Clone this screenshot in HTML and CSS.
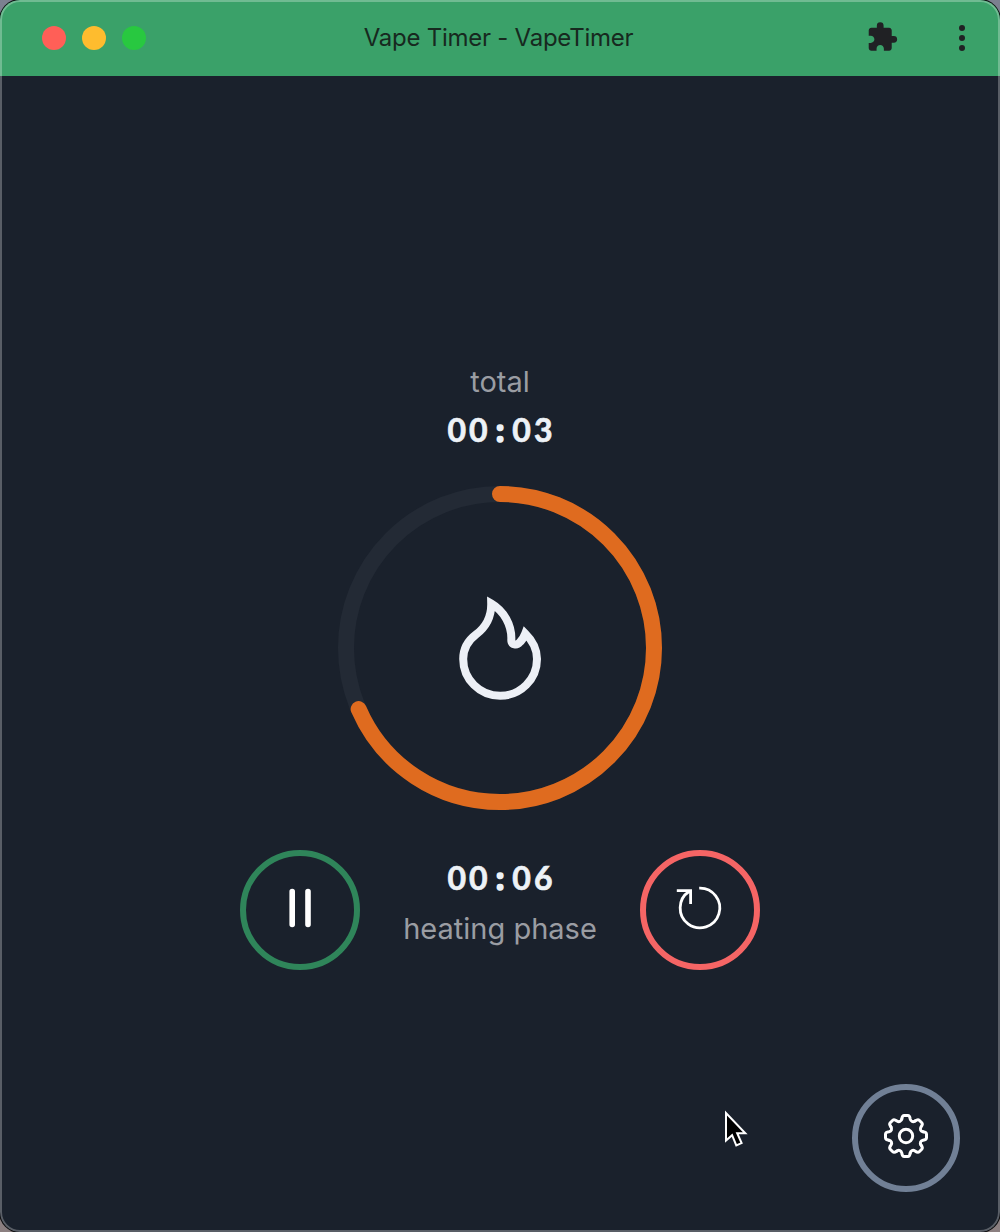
FILE: index.html
```html
<!DOCTYPE html>
<html lang="en">
<head>
<meta charset="utf-8">
<title>Vape Timer - VapeTimer</title>
<link rel="stylesheet" href="styles.css">
</head>
<body>
<div class="window">
  <header class="titlebar">
    <div class="lights"><i class="light close"></i><i class="light minimize"></i><i class="light maximize"></i></div>
    <h1 class="title">Vape Timer - VapeTimer</h1>
    <div class="tools">
      <svg class="puzzle" viewBox="0 0 24 24"><path d="M20.5 11H19V7c0-1.1-.9-2-2-2h-4V3.5a2.5 2.5 0 0 0-5 0V5H4c-1.1 0-1.99.9-1.99 2v3.8H3.5c1.49 0 2.7 1.21 2.7 2.7s-1.21 2.7-2.7 2.7H2V20c0 1.1.9 2 2 2h3.8v-1.5c0-1.49 1.21-2.7 2.7-2.7 1.49 0 2.7 1.21 2.7 2.7V22H17c1.1 0 2-.9 2-2v-4h1.5a2.5 2.5 0 0 0 0-5z"/></svg>
      <svg class="more" viewBox="0 0 8 28"><circle cx="4" cy="4" r="3"/><circle cx="4" cy="14" r="3"/><circle cx="4" cy="24" r="3"/></svg>
    </div>
  </header>
  <main class="content">
    <section class="total">
      <div class="label">total</div>
      <div class="time">00<span class="colon">:</span>03</div>
    </section>
    <svg class="ring" viewBox="0 0 324 324">
      <circle class="track" cx="162" cy="162" r="154"/>
      <circle class="progress" cx="162" cy="162" r="154" pathLength="100" transform="rotate(-90 162 162)"/>
      <path class="flame" transform="translate(-338 -486)" d="M491.2 603.5C504 611 512 625 511.3 640C511.3 645 517 645.6 519.5 642.5C523 639.5 524 637 525.3 633.5C533 641 537 650 537 659A36.8 36.7 0 0 1 463.2 659C463.2 648 468 640.5 476 634.5C486 627 491.5 618 491.2 603.5Z"/>
    </svg>
    <section class="controls">
      <button class="round pause" aria-label="Pause">
        <svg viewBox="0 0 120 120"><path class="bars" d="M52.2 41.5v33M68 41.5v33"/></svg>
      </button>
      <div class="phase">
        <div class="time">00<span class="colon">:</span>06</div>
        <div class="label">heating phase</div>
      </div>
      <button class="round reset" aria-label="Reset">
        <svg viewBox="0 0 120 120"><path class="line" d="M59.2 38.2A19.8 19.8 0 1 1 49 41.5M36.8 40.6H50.6V54"/></svg>
      </button>
    </section>
    <footer class="bottom">
      <button class="round settings" aria-label="Settings">
        <svg viewBox="-54 -54 108 108">
          <g class="gear" transform="translate(0 -2)">
            <path id="tooth" d="M-4.2-17C-3.9-19.5-3.2-20.5-1.8-20.5H1.8C3.2-20.5 3.9-19.5 4.2-17C4.8-14.5 6.86-13.65 9.05-14.99"/>
            <use href="#tooth" transform="rotate(45)"/><use href="#tooth" transform="rotate(90)"/>
            <use href="#tooth" transform="rotate(135)"/><use href="#tooth" transform="rotate(180)"/>
            <use href="#tooth" transform="rotate(225)"/><use href="#tooth" transform="rotate(270)"/>
            <use href="#tooth" transform="rotate(315)"/>
            <circle r="6.7"/>
          </g>
        </svg>
      </button>
    </footer>
  </main>
  <svg class="cursor" viewBox="0 0 26 40"><path d="M2 4V31.6L8.1 26.2L12.3 36.4L17.6 34.1L13.2 24.2H21.3Z"/></svg>
</div>
</body>
</html>
```
FILE: styles.css
```css
* { box-sizing: border-box; }
body {
  margin: 0;
  background: linear-gradient(#7c8090, #64687a 50%, #8b7f80);
  font-family: Inter, "Liberation Sans", sans-serif;
}
.window {
  position: relative;
  display: flex;
  flex-direction: column;
  height: 1232px;
  overflow: hidden;
  border-radius: 20px;
  background: #1a212c;
  box-shadow: 0 0 0 1px #111;
}
.window::after {
  content: "";
  position: absolute;
  inset: 0;
  border: 2px solid rgba(255, 255, 255, .28);
  border-radius: 20px;
  pointer-events: none;
}
.titlebar {
  display: grid;
  grid-template-columns: 1fr auto 1fr;
  align-items: center;
  height: 76px;
  padding: 0 35px 0 42px;
  background: #3aa169;
}
.lights { display: flex; gap: 16px; }
.light { width: 24px; height: 24px; border-radius: 50%; }
.close { background: #ff5f57; }
.minimize { background: #febc2e; }
.maximize { background: #28c840; }
.title {
  margin: 0 0 2px -10px;
  font-size: 24px;
  font-weight: 400;
  letter-spacing: -.25px;
  color: #17291f;
}
.tools { display: flex; justify-content: flex-end; align-items: center; gap: 60px; margin-right: -1px; fill: #202124; }
.puzzle { width: 32.5px; height: 32.5px; margin-bottom: 1px; }
.more { width: 8px; height: 28px; }
.content {
  display: flex;
  flex: 1;
  flex-direction: column;
  align-items: center;
  padding: 282px 40px 40px;
}
.total { margin-bottom: 32px; text-align: center; }
.label { height: 48px; line-height: 48px; font-size: 29px; color: #9a9da3; }
.time {
  height: 48px;
  font: 700 32px/48px Lato, "Noto Sans", sans-serif;
  letter-spacing: 3.04px;
  margin-right: -3px;
  color: #edf2f7;
  -webkit-text-stroke: .7px #edf2f7;
  text-align: center;
}
.colon { display: inline-block; width: 21.6px; font-family: Inter, sans-serif; line-height: 40px; -webkit-text-stroke-width: 1.6px; }
.ring { width: 324px; height: 324px; fill: none; }
.track { stroke: #232a35; stroke-width: 16; }
.progress { stroke: #df6b1f; stroke-width: 16; stroke-linecap: round; stroke-dasharray: 68.5 100; }
.flame { stroke: #edf0f6; stroke-width: 8; stroke-miterlimit: 10; }
.controls { display: flex; gap: 40px; margin-top: 40px; }
.phase { width: 200px; padding-top: 4px; text-align: center; white-space: nowrap; }
.phase .label { height: 54px; line-height: 54px; }
.round {
  width: 120px;
  height: 120px;
  padding: 0;
  border: 6px solid;
  border-radius: 50%;
  background: none;
}
.round svg { display: block; width: 120px; height: 120px; margin: -6px; fill: none; stroke: #fff; }
.pause { border-color: #2f855a; }
.reset { border-color: #f56565; }
.bars { stroke-width: 5.6; stroke-linecap: round; }
.line { stroke-width: 2.8; }
.bottom { align-self: flex-end; margin-top: auto; }
.settings { display: block; width: 108px; height: 108px; border-color: #718096; }
.settings svg { width: 108px; height: 108px; }
.gear { stroke-width: 3; stroke-linecap: round; }
.cursor {
  position: absolute;
  left: 724px;
  top: 1109px;
  width: 26px;
  height: 40px;
  fill: #000;
  stroke: #fff;
  stroke-width: 2;
}
```
